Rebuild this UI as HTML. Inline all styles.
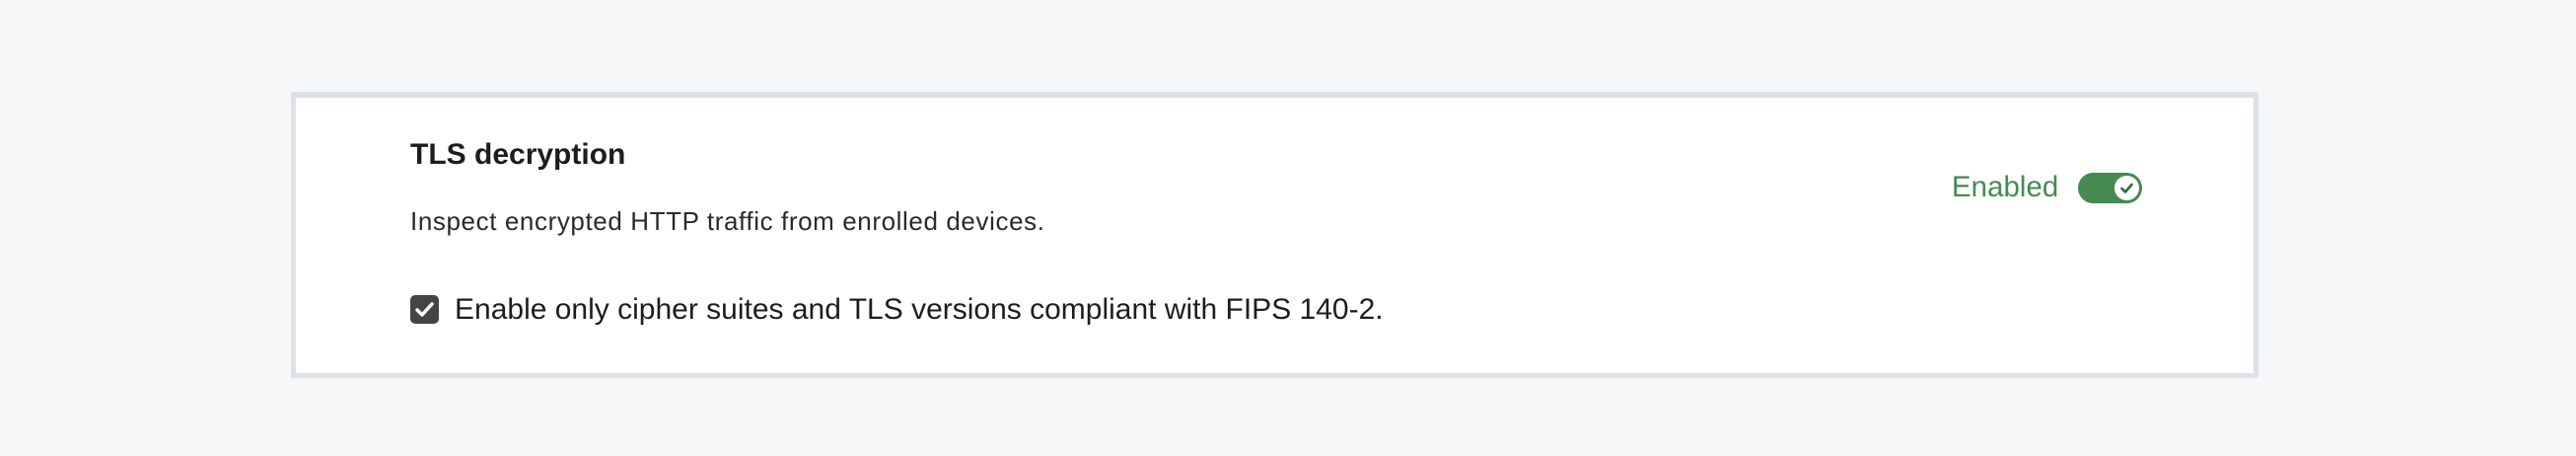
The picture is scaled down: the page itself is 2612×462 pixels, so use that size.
<!DOCTYPE html>
<html><head><meta charset="utf-8"><style>
html,body{margin:0;padding:0;background:#f6f7f9;width:2612px;height:462px;overflow:hidden;font-family:"Liberation Sans",sans-serif;}
.card{position:absolute;left:295px;top:93px;width:1985px;height:279px;background:#fff;border:5px solid #dde2e8;border-top-width:6px;}
.t{position:absolute;white-space:nowrap;}
</style></head><body>
<div class="card"></div>
<div class="t" style="left:416px;top:140px;font-size:30px;font-weight:bold;color:#1d1d1d;">TLS decryption</div>
<div class="t" style="left:416px;top:209px;font-size:26px;color:#2a2a2a;letter-spacing:0.6px;">Inspect encrypted HTTP traffic from enrolled devices.</div>
<div style="position:absolute;left:416px;top:299px;width:29px;height:29px;background:#444;border-radius:5px;">
<svg width="29" height="29" viewBox="0 0 29 29"><path d="M7 15 L12 20 L22 9" stroke="#fff" stroke-width="3.5" fill="none" stroke-linecap="round" stroke-linejoin="round"/></svg></div>
<div class="t" style="left:461px;top:297px;font-size:30px;color:#1d1d1d;">Enable only cipher suites and TLS versions compliant with FIPS 140-2.</div>
<div class="t" style="left:1979px;top:173px;font-size:29.5px;color:#458a50;">Enabled</div>
<div style="position:absolute;left:2107px;top:175px;width:65px;height:31px;background:#458a50;border-radius:16px;">
<div style="position:absolute;left:37px;top:3px;width:25px;height:25px;background:#fff;border-radius:50%;">
<svg width="25" height="25" viewBox="0 0 25 25"><path d="M7.5 13 L11 16.5 L17.5 9" stroke="#2f6b3a" stroke-width="2.6" fill="none" stroke-linecap="round" stroke-linejoin="round"/></svg></div></div>
</body></html>
